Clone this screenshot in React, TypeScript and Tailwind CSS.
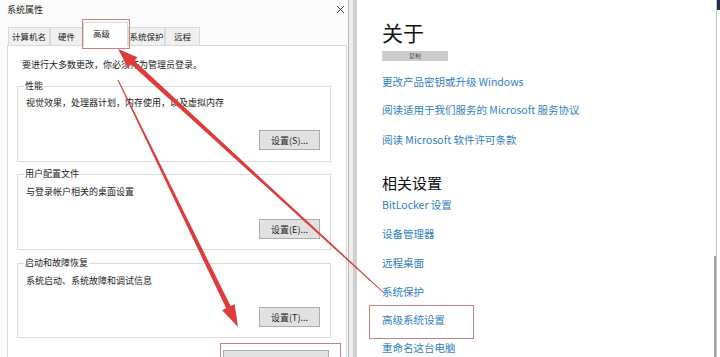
import React from 'react';

type Pt = [number, number];

const TABS: { label: string; w: string; active?: boolean }[] = [
    { label: '计算机名', w: 'w-[42px]' },
    { label: '硬件', w: 'w-[33px]' },
    { label: '高级', w: 'w-[45px]', active: true },
    { label: '系统保护', w: 'w-[37px]' },
    { label: '远程', w: 'w-[35px]' },
];

const GROUPS = [
    { legend: '性能', desc: '视觉效果，处理器计划，内存使用，以及虚拟内存', btn: '设置(S)...', mt: 'mt-[9px]', btnMt: 'mt-[21px]', descMt: 'mt-[5px]', pb: 'pb-[11px]' },
    { legend: '用户配置文件', desc: '与登录帐户相关的桌面设置', btn: '设置(E)...', mt: 'mt-[6px]', btnMt: 'mt-[21px]', descMt: 'mt-[6px]', pb: 'pb-[10px]' },
    { legend: '启动和故障恢复', desc: '系统启动、系统故障和调试信息', btn: '设置(T)...', mt: 'mt-[7px]', btnMt: 'mt-[20px]', descMt: 'mt-[6px]', pb: 'pb-[10px]' },
];

// tapered annotation arrow: thick at the head, thin at the tail
function arrowPoints(tip: Pt, tail: Pt, headLen: number, headW: number, wStart: number, wEnd: number) {
    const dx = tail[0] - tip[0];
    const dy = tail[1] - tip[1];
    const len = Math.hypot(dx, dy);
    const ux = dx / len;
    const uy = dy / len;
    const px = -uy;
    const py = ux;
    const bx = tip[0] + ux * headLen;
    const by = tip[1] + uy * headLen;
    const pts: Pt[] = [
        tip,
        [bx + (px * headW) / 2, by + (py * headW) / 2],
        [bx + (px * wStart) / 2, by + (py * wStart) / 2],
        [tail[0] + (px * wEnd) / 2, tail[1] + (py * wEnd) / 2],
        [tail[0] - (px * wEnd) / 2, tail[1] - (py * wEnd) / 2],
        [bx - (px * wStart) / 2, by - (py * wStart) / 2],
        [bx - (px * headW) / 2, by - (py * headW) / 2],
    ];
    return pts.map((p) => p.join(',')).join(' ');
}

function DialogButton({ label }: { label: string }) {
    return (
        <div className="flex h-[20px] w-[61px] items-center justify-center border border-[#adadad] bg-[#e1e1e1] text-[9px] leading-none text-[#222]">
            {label}
        </div>
    );
}

function SystemDialog() {
    return (
        <div className="flex h-full w-[349px] shrink-0 flex-col border-r border-[#b8b8b8] bg-[#fbfbfb] text-[#222]">
            <div className="flex h-[18px] shrink-0 items-center justify-between pl-[7px] pr-[3px]">
                <span className="text-[9px] leading-none">系统属性</span>
                <svg width="9" height="9" viewBox="0 0 9 9" className="text-[#333]">
                    <path d="M1 1 L8 8 M8 1 L1 8" stroke="currentColor" strokeWidth="0.9" />
                </svg>
            </div>

            <div className="flex h-[27px] shrink-0 items-end pl-[8px]">
                {TABS.map((t) =>
                    t.active ? (
                        <div
                            key={t.label}
                            className={`relative z-10 -mb-px flex h-[24px] ${t.w} items-start justify-start border border-b-0 border-[#d9d9d9] bg-white pl-[9px] pt-[6px] text-[8.5px] leading-none`}
                        >
                            {t.label}
                        </div>
                    ) : (
                        <div
                            key={t.label}
                            className={`flex h-[18px] ${t.w} items-center justify-center border border-b-0 border-[#d9d9d9] bg-[#f0f0f0] text-[8.5px] leading-none`}
                        >
                            {t.label}
                        </div>
                    ),
                )}
            </div>

            <div className="ml-[7px] mr-[1px] flex flex-1 flex-col border border-b-0 border-[#d9d9d9] bg-white pl-[9px] pr-[15px] pt-[13px]">
                <p className="ml-[5px] text-[9px] leading-[12px]">要进行大多数更改，你必须作为管理员登录。</p>

                {GROUPS.map((g) => (
                    <fieldset key={g.legend} className={`${g.mt} border border-[#dcdcdc] pl-[8px] pr-[10px] ${g.pb}`}>
                        <legend className="-ml-[2px] px-[1px] text-[9px] leading-[12px]">{g.legend}</legend>
                        <p className={`${g.descMt} text-[9px] leading-[12px]`}>{g.desc}</p>
                        <div className={`${g.btnMt} flex justify-end`}>
                            <DialogButton label={g.btn} />
                        </div>
                    </fieldset>
                ))}

                {/* next button, only its top edge is visible */}
                <div className="mt-[12px] flex justify-end pr-[2px]">
                    <div className="h-[20px] w-[106px] border border-[#adadad] bg-[#e1e1e1]" />
                </div>
            </div>
        </div>
    );
}

const LINKS_TOP = [
    { label: '更改产品密钥或升级 Windows', mt: 'mt-[14px]' },
    { label: '阅读适用于我们服务的 Microsoft 服务协议', mt: 'mt-[14px]' },
    { label: '阅读 Microsoft 软件许可条款', mt: 'mt-[16px]' },
];

const LINKS_RELATED = [
    { label: 'BitLocker 设置', mt: 'mt-[5px]' },
    { label: '设备管理器', mt: 'mt-[15px]' },
    { label: '远程桌面', mt: 'mt-[15px]' },
    { label: '系统保护', mt: 'mt-[15px]' },
    { label: '高级系统设置', mt: 'mt-[14px]' },
    { label: '重命名这台电脑', mt: 'mt-[14px]' },
];

function AboutPanel() {
    return (
        <div className="flex min-w-0 flex-1 flex-col bg-white pl-[25px] pt-[18px]">
            <h1 className="text-[21px] font-normal leading-[28px] text-[#111]">关于</h1>
            <div className="mt-[5px] flex h-[10px] w-[66px] items-start justify-center bg-[#cdcdcd] pt-[1px]">
                <span className="text-[6px] leading-[7px] text-[#555]">复制</span>
            </div>

            {LINKS_TOP.map((l) => (
                <a key={l.label} className={`${l.mt} block text-[10.5px] leading-[14px] text-[#2f7fc4]`}>
                    {l.label}
                </a>
            ))}

            <h2 className="mt-[26px] text-[15px] font-normal leading-[20px] text-[#111]">相关设置</h2>

            {LINKS_RELATED.map((l) => (
                <a key={l.label} className={`${l.mt} block text-[10.5px] leading-[14px] text-[#2f7fc4]`}>
                    {l.label}
                </a>
            ))}
        </div>
    );
}

export default function App() {
    const red = '#de3b3b';
    const boxRed = '#cc7f7f';

    return (
        <div className="relative flex h-[357px] w-[720px] overflow-hidden bg-white font-['Noto_Sans_CJK_SC','Noto_Sans',sans-serif]">
            <SystemDialog />

            <div className="w-[4px] shrink-0 bg-[#eeeeee]" />
            <div className="w-[4px] shrink-0 bg-[#d0d0d0]" />

            <AboutPanel />

            {/* right window edge with scrollbar */}
            <div className="flex w-[6px] shrink-0">
                <div className="flex w-[2px] flex-col">
                    <div className="h-[256px]" />
                    <div className="flex-1 bg-[#a3a3a3]" />
                </div>
                <div className="w-px bg-[#c4c4c4]" />
                <div className="flex w-[3px] flex-col">
                    <div className="h-[10px] bg-[#1f2f4f]" />
                </div>
            </div>

            {/* annotations */}
            <svg className="pointer-events-none absolute inset-0" width="720" height="357" viewBox="0 0 720 357">
                <rect x="82.5" y="19.5" width="47" height="29" fill="none" stroke={boxRed} strokeWidth="1" />
                <rect x="220.5" y="343.5" width="120" height="20" fill="none" stroke={boxRed} strokeWidth="1" />
                <rect x="369.5" y="305.5" width="104" height="33" fill="none" stroke={boxRed} strokeWidth="1" />
                <polygon points={arrowPoints([118, 49], [384, 293], 20, 14, 5, 1)} fill={red} />
                <polygon points={arrowPoints([238, 327], [118, 80], 22, 14, 5, 1)} fill={red} />
            </svg>
        </div>
    );
}
